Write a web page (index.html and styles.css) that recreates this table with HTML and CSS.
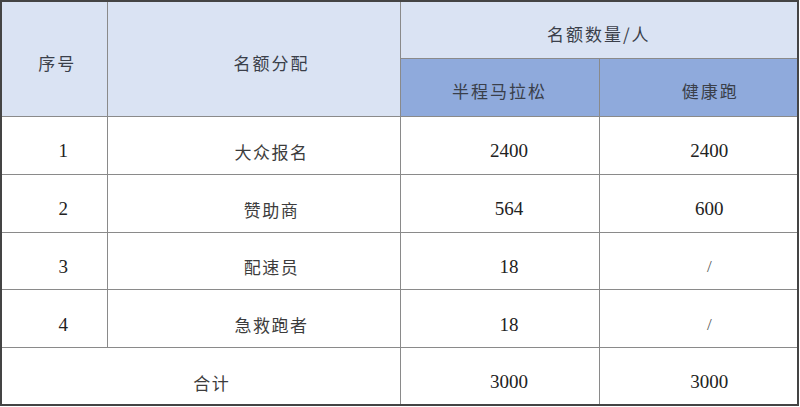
FILE: index.html
```html
<!DOCTYPE html>
<html lang="zh">
<head>
<meta charset="utf-8">
<link rel="stylesheet" href="styles.css">
</head>
<body>
<table class="quota">
  <colgroup>
    <col class="c-no">
    <col class="c-name">
    <col class="c-half">
    <col class="c-run">
  </colgroup>
  <thead>
    <tr class="r-head">
      <th rowspan="2" class="h-light first">序号</th>
      <th rowspan="2" class="h-light name">名额分配</th>
      <th colspan="2" class="h-light">名额数量/人</th>
    </tr>
    <tr class="r-head">
      <th class="h-blue">半程马拉松</th>
      <th class="h-blue fourth">健康跑</th>
    </tr>
  </thead>
  <tbody>
    <tr><td class="num first">1</td><td class="cn name">大众报名</td><td class="num third">2400</td><td class="num fourth">2400</td></tr>
    <tr><td class="num first">2</td><td class="cn name">赞助商</td><td class="num third">564</td><td class="num fourth">600</td></tr>
    <tr><td class="num first">3</td><td class="cn name">配速员</td><td class="num third">18</td><td class="num fourth slash">/</td></tr>
    <tr><td class="num first">4</td><td class="cn name">急救跑者</td><td class="num third">18</td><td class="num fourth slash">/</td></tr>
    <tr class="last"><td colspan="2" class="cn total">合计</td><td class="num third">3000</td><td class="num fourth">3000</td></tr>
  </tbody>
</table>
</body>
</html>
```
FILE: styles.css
```css
html, body {
  margin: 0;
  padding: 0;
  background: #ffffff;
}
.quota {
  border-collapse: collapse;
  table-layout: fixed;
  width: 799px;
  border: 2px solid #444;
}
.c-no { width: 106px; }
.c-name { width: 293px; }
.c-half { width: 199px; }
.c-run { width: 199px; }
.quota tr {
  height: 57.75px;
}
.quota th,
.quota td {
  border: 1px solid #8a8a8a;
  padding: 6px 0 0 0;
  text-align: center;
  vertical-align: middle;
}
.quota td {
  padding-top: 12px;
}
.quota th {
  font-family: "Noto Sans CJK SC", sans-serif;
  font-weight: 400;
  font-size: 17px;
  letter-spacing: 2px;
  color: #3a3f4a;
}
.h-light {
  background: #dae3f3;
}
.h-blue {
  background: #8faadc;
  color: #2a3040;
  border-top: 1px solid #3b4a6a;
}
.cn {
  font-family: "Noto Sans CJK SC", sans-serif;
  font-size: 17px;
  letter-spacing: 1.5px;
  color: #3c3c3c;
}
.quota .first { padding-left: 6px; }
.quota td.first { padding-left: 18px; }
.quota .name { padding-left: 36px; }
.quota .third { padding-left: 19px; }
.quota .fourth { padding-left: 22px; }
.quota th.fourth { padding-left: 24px; }
.num {
  font-family: "Liberation Serif", "Times New Roman", serif;
  font-size: 19px;
  color: #222;
}
.slash {
  color: #555;
  font-size: 17px;
}
.quota .total {
  padding-left: 22px;
}
```
